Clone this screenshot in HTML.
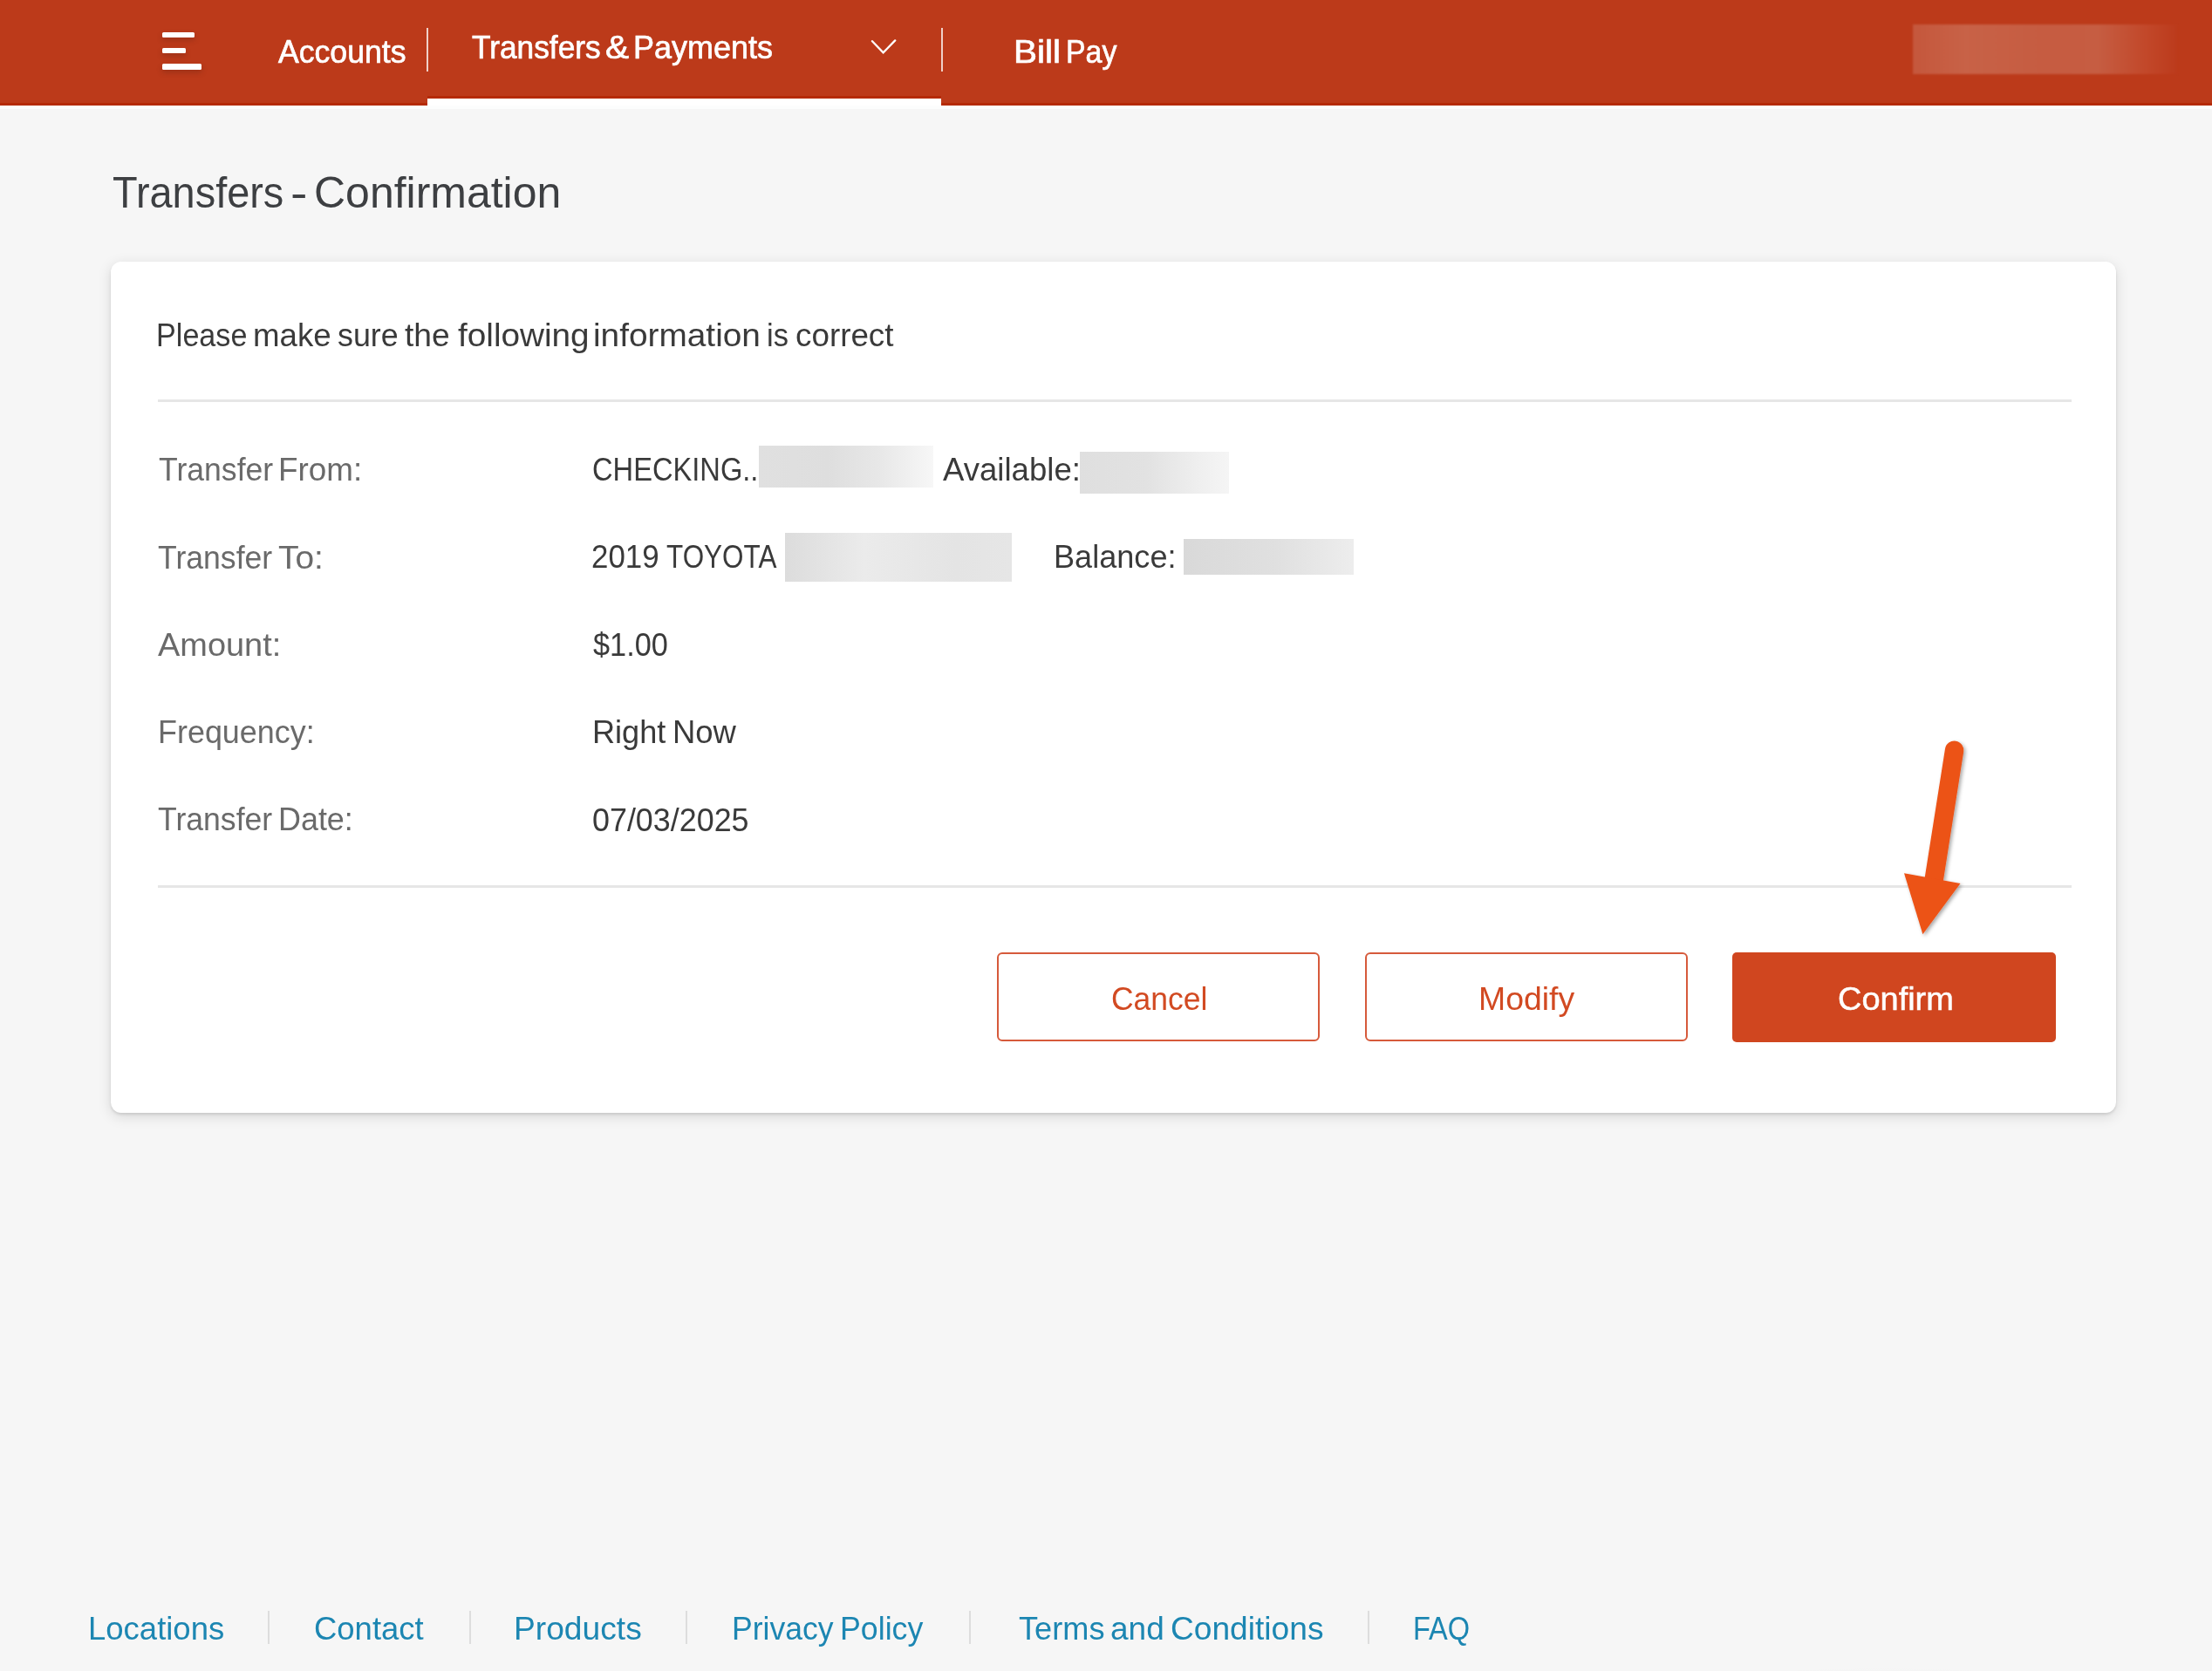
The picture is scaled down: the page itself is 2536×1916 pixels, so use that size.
<!DOCTYPE html>
<html><head><meta charset="utf-8"><title>Transfers - Confirmation</title>
<style>
html,body{margin:0;padding:0;}
body{width:2536px;height:1916px;position:relative;overflow:hidden;background:#f6f6f6;font-family:"Liberation Sans",sans-serif;}
.t{position:absolute;white-space:pre;line-height:1;transform-origin:0 0;}
.a{position:absolute;}
</style></head><body>
<div class="a" style="left:0;top:0;width:2536px;height:121px;background:#bc3a1a;"></div>
<div class="a" style="left:0;top:117.5px;width:490px;height:3px;background:#b52a06"></div>
<div class="a" style="left:1079px;top:117.5px;width:1457px;height:3px;background:#b52a06"></div>
<div class="a" style="left:490px;top:110px;width:589px;height:2.5px;background:#b52a06"></div>
<div class="a" style="left:0;top:121px;width:2536px;height:3.5px;background:#fcfdfd"></div>
<!-- hamburger -->
<div class="a" style="left:185.5px;top:36.5px;width:37px;height:6px;border-radius:1.5px;background:#fff;box-shadow:0 3px 6px rgba(70,30,20,0.28)"></div>
<div class="a" style="left:185.5px;top:54.8px;width:27px;height:6.5px;border-radius:1.5px;background:#fff;box-shadow:0 3px 6px rgba(70,30,20,0.28)"></div>
<div class="a" style="left:185.5px;top:73px;width:45.5px;height:6.5px;border-radius:1.5px;background:#fff;box-shadow:0 3px 6px rgba(70,30,20,0.28)"></div>
<!-- separators -->
<div class="a" style="left:488.8px;top:31.5px;width:2.6px;height:50.5px;background:rgba(245,225,220,0.9)"></div>
<div class="a" style="left:1078.5px;top:31.5px;width:2.6px;height:50.5px;background:rgba(245,225,220,0.9)"></div>
<!-- active underline -->
<div class="a" style="left:490px;top:113px;width:589px;height:8px;background:#fff"></div>
<!-- chevron -->
<svg class="a" style="left:990px;top:40px" width="44" height="30" viewBox="0 0 44 30"><path d="M10 7.2 L22.6 20.4 L36.2 6.4" fill="none" stroke="#fff" stroke-width="2.3" stroke-linecap="round" stroke-linejoin="miter"/></svg>
<!-- blurred user box -->
<div class="a" style="left:2193px;top:28px;width:303px;height:57px;background:linear-gradient(90deg,#c5573c 0%,#c86247 20%,#c65c41 50%,#c65d42 70%,#c2482a 88%,#bc3b1c 100%);filter:blur(1px)"></div>
<!-- card -->
<div class="a" style="left:127px;top:300px;width:2299px;height:976px;background:#fff;border-radius:12px;box-shadow:0 2px 3px rgba(0,0,0,0.10),0 4px 16px rgba(0,0,0,0.13)"></div>
<div class="a" style="left:181px;top:458px;width:2194px;height:3px;background:#e6e6e6"></div>
<div class="a" style="left:181px;top:1014.5px;width:2194px;height:3px;background:#e6e6e6"></div>
<!-- redactions -->
<div class="a" style="left:870px;top:510.5px;width:200px;height:48px;background:linear-gradient(90deg,#e0e0e0,#dedede 40%,#e8e8e8 70%,#f7f7f7)"></div>
<div class="a" style="left:1237.5px;top:517.5px;width:171px;height:48.5px;background:linear-gradient(90deg,#dfdfdf,#e2e2e2 45%,#efefef 80%,#f5f5f5)"></div>
<div class="a" style="left:899.6px;top:610.6px;width:260.4px;height:56px;background:linear-gradient(90deg,#dcdcdc,#ebebeb 35%,#e4e4e4 75%,#e6e6e6)"></div>
<div class="a" style="left:1357px;top:617.8px;width:194.5px;height:41px;background:linear-gradient(90deg,#d9d9d9,#e0e0e0 55%,#ededed)"></div>
<!-- buttons -->
<div class="a" style="left:1143px;top:1092px;width:370px;height:102px;box-sizing:border-box;border:2.6px solid #d65a3b;border-radius:6px;background:#fff"></div>
<div class="a" style="left:1565px;top:1092px;width:370px;height:102px;box-sizing:border-box;border:2.6px solid #d65a3b;border-radius:6px;background:#fff"></div>
<div class="a" style="left:1986px;top:1092px;width:370.5px;height:102.5px;box-sizing:border-box;border-radius:5px;background:#d0461f"></div>
<div class="t" style="left:319.2px;top:41.0px;font-size:37.00px;color:#fff;transform:scaleX(0.9625);-webkit-text-stroke:0.7px #fff;">Accounts</div>
<div class="t" style="left:541.3px;top:36.0px;font-size:37.00px;color:#fff;transform:scaleX(0.9535);-webkit-text-stroke:0.7px #fff;">Transfers</div>
<div class="t" style="left:694.3px;top:36.0px;font-size:37.00px;color:#fff;transform:scaleX(1.0944);-webkit-text-stroke:0.7px #fff;">&amp;</div>
<div class="t" style="left:726.1px;top:36.0px;font-size:37.00px;color:#fff;transform:scaleX(0.9725);-webkit-text-stroke:0.7px #fff;">Payments</div>
<div class="t" style="left:1162.0px;top:40.8px;font-size:37.00px;color:#fff;transform:scaleX(1.0947);-webkit-text-stroke:0.7px #fff;">Bill</div>
<div class="t" style="left:1221.7px;top:40.8px;font-size:37.00px;color:#fff;transform:scaleX(0.9163);-webkit-text-stroke:0.7px #fff;">Pay</div>
<div class="t" style="left:128.5px;top:195.6px;font-size:49.30px;color:#3d3f42;transform:scaleX(0.9513);">Transfers</div>
<div class="t" style="left:333.2px;top:195.6px;font-size:49.30px;color:#3d3f42;transform:scaleX(1.1846);">-</div>
<div class="t" style="left:360.1px;top:195.6px;font-size:49.30px;color:#3d3f42;transform:scaleX(1.0138);">Confirmation</div>
<div class="t" style="left:179.1px;top:365.7px;font-size:37.00px;color:#3a3a3a;transform:scaleX(0.9233);">Please</div>
<div class="t" style="left:290.0px;top:365.7px;font-size:37.00px;color:#3a3a3a;transform:scaleX(0.9918);">make</div>
<div class="t" style="left:386.8px;top:365.7px;font-size:37.00px;color:#3a3a3a;transform:scaleX(0.9683);">sure</div>
<div class="t" style="left:464.0px;top:365.7px;font-size:37.00px;color:#3a3a3a;transform:scaleX(1.0059);">the</div>
<div class="t" style="left:524.6px;top:365.7px;font-size:37.00px;color:#3a3a3a;transform:scaleX(1.0464);">following</div>
<div class="t" style="left:679.9px;top:365.7px;font-size:37.00px;color:#3a3a3a;transform:scaleX(1.0485);">information</div>
<div class="t" style="left:878.5px;top:365.7px;font-size:37.00px;color:#3a3a3a;transform:scaleX(0.9329);">is</div>
<div class="t" style="left:911.5px;top:365.7px;font-size:37.00px;color:#3a3a3a;transform:scaleX(0.9949);">correct</div>
<div class="t" style="left:181.6px;top:519.8px;font-size:37.00px;color:#6a6a6a;transform:scaleX(0.9619);">Transfer</div>
<div class="t" style="left:318.7px;top:519.8px;font-size:37.00px;color:#6a6a6a;transform:scaleX(0.9958);">From:</div>
<div class="t" style="left:181.4px;top:620.8px;font-size:37.00px;color:#6a6a6a;transform:scaleX(0.9619);">Transfer</div>
<div class="t" style="left:319.0px;top:620.8px;font-size:37.00px;color:#6a6a6a;transform:scaleX(1.0501);">To:</div>
<div class="t" style="left:180.9px;top:720.8px;font-size:37.00px;color:#6a6a6a;transform:scaleX(1.0252);">Amount:</div>
<div class="t" style="left:180.6px;top:821.4px;font-size:37.00px;color:#6a6a6a;transform:scaleX(0.9708);">Frequency:</div>
<div class="t" style="left:181.4px;top:921.3px;font-size:37.00px;color:#6a6a6a;transform:scaleX(0.9619);">Transfer</div>
<div class="t" style="left:319.1px;top:921.3px;font-size:37.00px;color:#6a6a6a;transform:scaleX(0.9703);">Date:</div>
<div class="t" style="left:678.8px;top:519.9px;font-size:37.00px;color:#3a3a3a;transform:scaleX(0.8821);">CHECKING..</div>
<div class="t" style="left:1080.7px;top:519.8px;font-size:37.00px;color:#3a3a3a;transform:scaleX(0.9884);">Available:</div>
<div class="t" style="left:678.2px;top:620.4px;font-size:37.00px;color:#3a3a3a;transform:scaleX(0.9428);">2019</div>
<div class="t" style="left:763.5px;top:620.4px;font-size:37.00px;color:#3a3a3a;transform:scaleX(0.8500);">TOYOTA</div>
<div class="t" style="left:1207.8px;top:619.5px;font-size:37.00px;color:#3a3a3a;transform:scaleX(0.9757);">Balance:</div>
<div class="t" style="left:679.7px;top:720.8px;font-size:37.00px;color:#3a3a3a;transform:scaleX(0.9266);">$1.00</div>
<div class="t" style="left:678.9px;top:821.1px;font-size:37.00px;color:#3a3a3a;transform:scaleX(0.9766);">Right</div>
<div class="t" style="left:771.1px;top:821.1px;font-size:37.00px;color:#3a3a3a;transform:scaleX(0.9854);">Now</div>
<div class="t" style="left:678.6px;top:921.5px;font-size:37.00px;color:#3a3a3a;transform:scaleX(0.9696);">07/03/2025</div>
<div class="t" style="left:1274.4px;top:1127.2px;font-size:37.00px;color:#d24a22;transform:scaleX(0.9586);">Cancel</div>
<div class="t" style="left:1695.2px;top:1127.2px;font-size:37.00px;color:#d24a22;transform:scaleX(1.0112);">Modify</div>
<div class="t" style="left:2106.5px;top:1127.2px;font-size:37.00px;color:#fff;transform:scaleX(1.0259);-webkit-text-stroke:0.5px #fff;">Confirm</div>
<div class="t" style="left:100.6px;top:1849.0px;font-size:37.00px;color:#1c86b2;transform:scaleX(0.9862);">Locations</div>
<div class="t" style="left:360.2px;top:1849.0px;font-size:37.00px;color:#1c86b2;transform:scaleX(0.9854);">Contact</div>
<div class="t" style="left:588.6px;top:1849.0px;font-size:37.00px;color:#1c86b2;transform:scaleX(1.0049);">Products</div>
<div class="t" style="left:838.6px;top:1849.0px;font-size:37.00px;color:#1c86b2;transform:scaleX(0.9608);">Privacy</div>
<div class="t" style="left:963.3px;top:1849.0px;font-size:37.00px;color:#1c86b2;transform:scaleX(0.9658);">Policy</div>
<div class="t" style="left:1167.7px;top:1849.0px;font-size:37.00px;color:#1c86b2;transform:scaleX(0.9778);">Terms</div>
<div class="t" style="left:1273.1px;top:1849.0px;font-size:37.00px;color:#1c86b2;transform:scaleX(0.9997);">and</div>
<div class="t" style="left:1342.1px;top:1849.0px;font-size:37.00px;color:#1c86b2;transform:scaleX(1.0036);">Conditions</div>
<div class="t" style="left:1619.8px;top:1849.0px;font-size:37.00px;color:#1c86b2;transform:scaleX(0.8802);">FAQ</div>
<!-- footer separators -->
<div class="a" style="left:307px;top:1846.5px;width:2px;height:38px;background:#dddddd"></div>
<div class="a" style="left:537.5px;top:1846.5px;width:2px;height:38px;background:#dddddd"></div>
<div class="a" style="left:785.5px;top:1846.5px;width:2px;height:38px;background:#dddddd"></div>
<div class="a" style="left:1110.5px;top:1846.5px;width:2px;height:38px;background:#dddddd"></div>
<div class="a" style="left:1568px;top:1846.5px;width:2px;height:38px;background:#dddddd"></div>
<div class="a" style="left:1750px;top:1840px;width:820px;height:140px;background:radial-gradient(ellipse 50% 50% at 50% 100%,rgba(0,0,0,0.045),rgba(0,0,0,0.02) 55%,rgba(0,0,0,0) 100%)"></div>
<!-- arrow -->
<svg class="a" style="left:0;top:0" width="2536" height="1916" viewBox="0 0 2536 1916">
<defs><filter id="sh" x="-50%" y="-50%" width="200%" height="200%"><feDropShadow dx="2" dy="2" stdDeviation="2" flood-color="#000" flood-opacity="0.35"/></filter></defs>
<g filter="url(#sh)" fill="#ec5218">
<line x1="2240.6" y1="860.3" x2="2217" y2="1010" stroke="#ec5218" stroke-width="21.5" stroke-linecap="round"/>
<path d="M2183 1001.2 L2247.5 1012.9 L2204.4 1071.2 Z"/>
</g>
</svg>
</body></html>
